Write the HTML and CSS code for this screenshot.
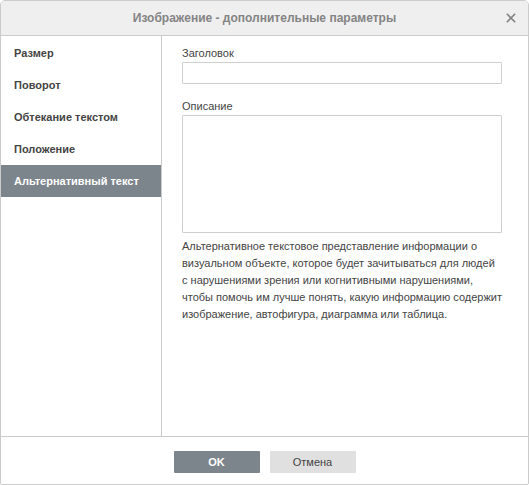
FILE: index.html
```html
<!DOCTYPE html>
<html lang="ru">
<head>
<meta charset="utf-8">
<title>Изображение - дополнительные параметры</title>
<link rel="stylesheet" href="styles.css">
</head>
<body>
<div class="dialog">
  <div class="header">
    <span class="title">Изображение - дополнительные параметры</span>
    <span class="close" aria-label="Закрыть">
      <svg width="10" height="10" viewBox="0 0 10 10"><path d="M0.8 0.8 L9.2 9.2 M9.2 0.8 L0.8 9.2" stroke="#848484" stroke-width="1.6" fill="none"/></svg>
    </span>
  </div>
  <div class="body">
    <ul class="side">
      <li class="item">Размер</li>
      <li class="item">Поворот</li>
      <li class="item">Обтекание текстом</li>
      <li class="item">Положение</li>
      <li class="item active">Альтернативный текст</li>
    </ul>
    <div class="content">
      <label class="label">Заголовок</label>
      <div class="input"></div>
      <label class="label label-gap">Описание</label>
      <div class="textarea"></div>
      <p class="desc">Альтернативное текстовое представление информации о визуальном объекте, которое будет зачитываться для людей с&nbsp;нарушениями зрения или когнитивными нарушениями, чтобы&nbsp;помочь им лучше понять, какую информацию содержит изображение, автофигура, диаграмма или таблица.</p>
    </div>
  </div>
  <div class="footer">
    <button class="btn primary">OK</button>
    <button class="btn">Отмена</button>
  </div>
</div>
</body>
</html>
```

FILE: styles.css
```css
html, body {
  margin: 0;
  padding: 0;
  background: #ffffff;
}
body {
  font-family: "Liberation Sans", Arial, sans-serif;
  font-size: 11px;
  color: #444444;
}
.dialog {
  width: 529px;
  height: 485px;
  box-sizing: border-box;
  border: 1px solid #cbcbcb;
  border-radius: 5px 5px 2px 2px;
  display: flex;
  flex-direction: column;
  overflow: hidden;
  background: #ffffff;
}
.header {
  height: 34px;
  flex: none;
  background: #efefef;
  border-bottom: 1px solid #cbcbcb;
  display: flex;
  align-items: center;
  justify-content: center;
  position: relative;
}
.title {
  font-size: 12px;
  font-weight: bold;
  color: #848484;
}
.close {
  position: absolute;
  right: 12px;
  top: 12px;
  width: 10px;
  height: 10px;
  display: flex;
}
.body {
  flex: 1;
  display: flex;
  min-height: 0;
}
.side {
  list-style: none;
  margin: 0;
  padding: 1px 0 0 0;
  width: 160px;
  flex: none;
  border-right: 1px solid #cbcbcb;
}
.item {
  height: 32px;
  line-height: 32px;
  padding-left: 13px;
  font-weight: bold;
  color: #444444;
}
.item.active {
  background: #7d858c;
  color: #ffffff;
}
.content {
  flex: 1;
  padding: 10px 0 0 20px;
  display: flex;
  flex-direction: column;
  align-items: flex-start;
}
.label {
  display: block;
  height: 14px;
  line-height: 14px;
  margin-bottom: 2px;
  color: #444444;
}
.label-gap {
  margin-top: 15px;
}
.input {
  width: 320px;
  height: 22px;
  box-sizing: border-box;
  border: 1px solid #cfcfcf;
  border-radius: 1px;
}
.textarea {
  width: 320px;
  height: 118px;
  box-sizing: border-box;
  border: 1px solid #cfcfcf;
  border-radius: 1px;
}
.desc {
  margin: 5px 0 0 0;
  width: 328px;
  line-height: 17px;
  color: #444444;
}
.footer {
  height: 48px;
  flex: none;
  border-top: 1px solid #cbcbcb;
  display: flex;
  justify-content: center;
  align-items: flex-start;
  padding-top: 14px;
  box-sizing: border-box;
  gap: 10px;
}
.btn {
  width: 86px;
  height: 22px;
  border: none;
  border-radius: 1px;
  background: #e0e0e0;
  color: #444444;
  font-family: "Liberation Sans", Arial, sans-serif;
  font-size: 11px;
  padding: 0;
}
.btn.primary {
  background: #7d858c;
  color: #ffffff;
  font-weight: bold;
}
```
